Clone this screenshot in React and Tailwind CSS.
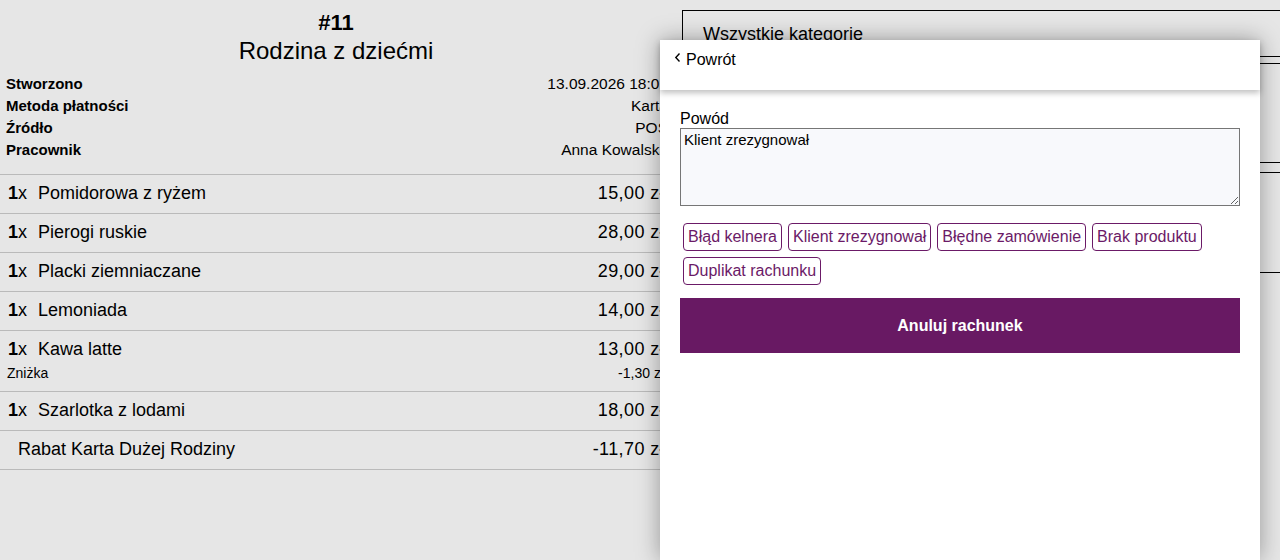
import React from "react";

const items = [
  { q: 1, name: "Pomidorowa z ryżem", price: "15,00 zł" },
  { q: 1, name: "Pierogi ruskie", price: "28,00 zł" },
  { q: 1, name: "Placki ziemniaczane", price: "29,00 zł" },
  { q: 1, name: "Lemoniada", price: "14,00 zł" },
  { q: 1, name: "Kawa latte", price: "13,00 zł", disc: "-1,30 zł" },
  { q: 1, name: "Szarlotka z lodami", price: "18,00 zł" },
];

const meta = [
  ["Stworzono", "13.09.2026 18:02"],
  ["Metoda płatności", "Karta"],
  ["Źródło", "POS"],
  ["Pracownik", "Anna Kowalska"],
];

const chips = ["Błąd kelnera", "Klient zrezygnował", "Błędne zamówienie", "Brak produktu", "Duplikat rachunku"];

export default function App() {
  return (
    <div
      className="relative h-[560px] w-full overflow-hidden bg-[#e6e6e6] text-black"
      style={{ fontFamily: '"Liberation Sans", Arial, sans-serif' }}
    >
      <div className="flex items-start">
        {/* Receipt */}
        <div className="w-[672px] shrink-0">
          <div className="pt-[9px] text-center">
            <div className="text-[22px] font-bold leading-[28px]">#11</div>
            <div className="text-[24px] leading-[28px]">Rodzina z dziećmi</div>
          </div>
          <div className="mt-[8px] mb-[13px] pl-[6px] pr-[4px] text-[15px] leading-[22px]">
            {meta.map(([k, v]) => (
              <div key={k} className="flex justify-between">
                <span className="font-bold">{k}</span>
                <span className="text-[15.5px]">{v}</span>
              </div>
            ))}
          </div>
          <div className="border-t border-[#bababa]">
            {items.map((it) => (
              <div key={it.name} className="border-b border-[#bababa] pt-[7px] pb-[9px] pl-[8px] pr-[8px]">
                <div className="flex justify-between text-[18px] leading-[22px]">
                  <div>
                    <span className="font-bold">{it.q}</span>
                    <span>x</span>
                    <span className="ml-[11px]">{it.name}</span>
                  </div>
                  <span className="tracking-[0.4px]">{it.price}</span>
                </div>
                {it.disc && (
                  <div className="mt-[3px] -mb-[1px] -ml-[1px] flex justify-between text-[14px] leading-[20px]">
                    <span>Zniżka</span>
                    <span>{it.disc}</span>
                  </div>
                )}
              </div>
            ))}
            <div className="flex justify-between border-b border-[#bababa] pt-[7px] pb-[9px] pl-[18px] pr-[8px] text-[18px] leading-[22px]">
              <span>Rabat Karta Dużej Rodziny</span>
              <span className="tracking-[0.4px]">-11,70 zł</span>
            </div>
          </div>
        </div>

        {/* Categories box */}
        <div className="ml-[10px] mt-[10px] w-[640px] shrink-0 border border-black">
          <div className="h-[46px] border-b border-black px-[20px] pt-[12px] text-[18px] leading-[22px]">
            Wszystkie kategorie
          </div>
          <div className="mt-[6px] h-[100px] border-y border-black"></div>
          <div className="mt-[9px] h-[101px] border-y border-black"></div>
          <div className="h-[300px]"></div>
        </div>
      </div>

      {/* Modal */}
      <div className="absolute left-[660px] top-[40px] bottom-0 w-[600px] bg-white shadow-[0_0_22px_rgba(0,0,0,0.35)]">
        <div className="relative z-10 h-[50px] bg-white shadow-[0_3px_6px_rgba(0,0,0,0.25)]">
          <button className="flex items-center pl-[14px] pt-[11px] text-[16px] leading-[18px]">
            <svg width="8" height="12" viewBox="0 0 8 12" className="mr-[4px] -mt-[5px]">
              <path d="M5.5 1.5 L1.8 5.5 L5.5 9.5" fill="none" stroke="#000" strokeWidth="1.4" />
            </svg>
            Powrót
          </button>
        </div>
        <div className="px-[20px] pt-[19px]">
          <div className="text-[16px] leading-[19px]">Powód</div>
          <textarea
            defaultValue="Klient zrezygnował"
            className="block h-[78px] w-full resize-y border border-[#767676] bg-[#f8f9fc] px-[3px] py-[2px] text-[15px] leading-[18px] outline-none"
            style={{ fontFamily: '"Liberation Sans", Arial, sans-serif' }}
          />
          <div className="mt-[14px] flex flex-wrap">
            {chips.map((c) => (
              <button
                key={c}
                className="m-[3px] h-[28px] rounded-[4px] border border-[#6b1a67] px-[4px] text-[16px] leading-[26px] text-[#6b1a67]"
              >
                {c}
              </button>
            ))}
          </div>
          <button className="mt-[10px] h-[55px] w-full bg-[#681963] text-[16px] font-bold text-white">
            Anuluj rachunek
          </button>
        </div>
      </div>
    </div>
  );
}
